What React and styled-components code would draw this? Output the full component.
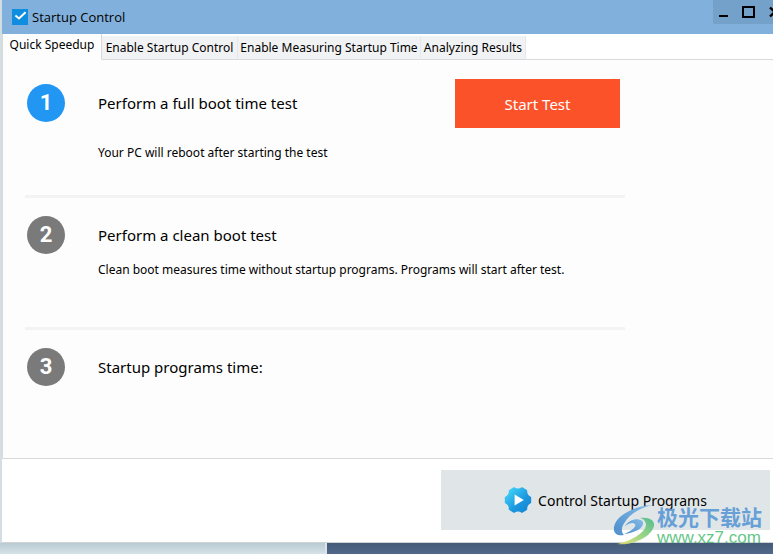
import React, { useState } from 'react';
import styled, { createGlobalStyle } from 'styled-components';

const tabs = [
  { label: 'Quick Speedup', width: 99 },
  { label: 'Enable Startup Control', width: 136 },
  { label: 'Enable Measuring Startup Time', width: 183 },
  { label: 'Analyzing Results', width: 105 },
];

const steps = [
  {
    title: 'Perform a full boot time test',
    note: 'Your PC will reboot after starting the test',
    noteGap: 17,
    action: 'Start Test',
    active: true,
  },
  {
    title: 'Perform a clean boot test',
    note: 'Clean boot measures time without startup programs. Programs will start after test.',
    noteGap: 2,
  },
  { title: 'Startup programs time:' },
];

const AppIcon = () => (
  <svg width="16" height="16" viewBox="0 0 16 16" aria-hidden="true">
    <rect width="16" height="16" fill="#0f8ee0" />
    <path d="M3.4 6.4 L7 9.4 L13.6 3.2" fill="none" stroke="#fff" strokeWidth="2" />
  </svg>
);

const GearIcon = () => (
  <svg width="28" height="28" viewBox="0 0 28 28" aria-hidden="true">
    <defs>
      <linearGradient id="gear" x1="0" y1="0" x2="1" y2="1">
        <stop offset="0.1" stopColor="#3fd0f7" />
        <stop offset="0.6" stopColor="#1b97df" />
        <stop offset="1" stopColor="#1583cf" />
      </linearGradient>
    </defs>
    <path
      d="M18 2 L22.4 4.6 Q22 9.4 26.4 11.5 V16.5 Q22 18.6 22.4 23.4 L18 26 Q14 23.2 10 26 L5.6 23.4 Q6 18.6 1.6 16.5 V11.5 Q6 9.4 5.6 4.6 L10 2 Q14 4.8 18 2 Z"
      fill="url(#gear)"
      stroke="url(#gear)"
      strokeWidth="1.6"
      strokeLinejoin="round"
    />
    <path d="M10.6 8.4 L19.8 14 L10.6 19.6 Z" fill="#fff" />
  </svg>
);

const SwirlLogo = () => (
  <svg width="44" height="42" viewBox="0 0 44 42" aria-hidden="true">
    <defs>
      <linearGradient id="swirlBlue" x1="0" y1="1" x2="1" y2="0">
        <stop offset="0" stopColor="#3b84c8" />
        <stop offset="1" stopColor="#7db7e8" />
      </linearGradient>
      <linearGradient id="swirlGreen" x1="0" y1="1" x2="1" y2="0">
        <stop offset="0" stopColor="#f0e36a" />
        <stop offset="0.5" stopColor="#8fd07a" />
        <stop offset="1" stopColor="#45b98a" />
      </linearGradient>
    </defs>
    <path
      d="M39 1 C22 2 3 11 1 23 C0 30 5 32 11 31 C8 28 8 23 12 18 C17 10 27 4 39 1 Z"
      fill="url(#swirlBlue)"
    />
    <path
      d="M12 22 C16 15 27 13 30 18 C31 24 22 29 11 30 C19 27 24 22 22 20 C20 18 16 19 12 22 Z"
      fill="url(#swirlBlue)"
    />
    <path
      d="M27 14 C36 13 42 16 41 22 C38 33 20 42 4 40 C18 37 32 29 33 21 C33 18 31 15 27 14 Z"
      fill="url(#swirlGreen)"
    />
  </svg>
);

const App = () => {
  const [current, setCurrent] = useState(0);

  return (
    <Desktop>
      <GlobalStyle />
      <Window>
        <TitleBar>
          <AppIcon />
          <Title>Startup Control</Title>
          <WindowButtons>
            <WindowButton aria-label="Minimize">
              <svg width="9" height="12" viewBox="0 0 9 12">
                <path d="M0 10 H9" stroke="#000" strokeWidth="2" />
              </svg>
            </WindowButton>
            <WindowButton aria-label="Maximize">
              <svg width="13" height="12" viewBox="0 0 13 12">
                <path d="M1 1 H12 V11 H1 Z" fill="none" stroke="#000" strokeWidth="2" />
              </svg>
            </WindowButton>
            <WindowButton aria-label="Close">
              <svg width="12" height="12" viewBox="0 0 12 12">
                <path d="M1 1.5 L10.5 10.5 M10.5 1.5 L1 10.5" stroke="#000" strokeWidth="2.4" />
              </svg>
            </WindowButton>
          </WindowButtons>
        </TitleBar>

        <TabBar role="tablist">
          {tabs.map((tab, i) => (
            <Tab
              key={tab.label}
              role="tab"
              aria-selected={i === current}
              $selected={i === current}
              $width={tab.width}
              onClick={() => setCurrent(i)}
            >
              {tab.label}
            </Tab>
          ))}
          <TabFiller />
        </TabBar>

        <Panel role="tabpanel">
          {steps.map((step, i) => (
            <Step key={step.title}>
              <StepHead>
                <StepNumber $active={step.active}>{i + 1}</StepNumber>
                <StepTitle>{step.title}</StepTitle>
                {step.action && <StartButton>{step.action}</StartButton>}
              </StepHead>
              {step.note && <StepNote $gap={step.noteGap}>{step.note}</StepNote>}
            </Step>
          ))}
        </Panel>

        <Footer>
          <ControlButton>
            <GearIcon />
            Control Startup Programs
          </ControlButton>
        </Footer>
      </Window>

      <Backdrop>
        <BackdropLight />
        <BackdropDark />
      </Backdrop>

      <Watermark>
        <SwirlLogo />
        <div>
          <WatermarkName>极光下载站</WatermarkName>
          <WatermarkSite>www.xz7.com</WatermarkSite>
        </div>
      </Watermark>
    </Desktop>
  );
};

const GlobalStyle = createGlobalStyle`
  * {
    box-sizing: border-box;
  }

  body {
    margin: 0;
    overflow: hidden;
  }

  body, button {
    font-family: 'Trebuchet MS', 'Noto Sans', 'Open Sans', sans-serif;
    color: #000;
  }

  button {
    border: none;
    padding: 0;
  }

  svg {
    display: block;
    flex: none;
  }
`;

const Desktop = styled.div`
  position: relative;
  display: flex;
  flex-direction: column;
  min-height: 100vh;
  background: #d3dee3;
`;

const Window = styled.main`
  margin-left: 2px;
  background: #fff;
  border-bottom: 1px solid #cfd3d5;
`;

const TitleBar = styled.header`
  display: flex;
  align-items: center;
  height: 34px;
  padding-left: 10px;
  background: #80b0db;
`;

const Title = styled.h1`
  flex: 1;
  margin: 0 0 0 4px;
  font-family: 'Open Sans', sans-serif;
  font-size: 13px;
  font-weight: 400;
  line-height: 18px;
`;

const WindowButtons = styled.div`
  display: flex;
  align-self: flex-start;
  width: 60px;
  height: 24px;
  overflow: hidden;
  padding-left: 6px;
  gap: 14px;
  background: #73a1c9;
`;

const WindowButton = styled.button`
  flex: none;
  display: flex;
  align-items: center;
  background: transparent;
`;

const TabBar = styled.div`
  display: flex;
  align-items: flex-end;
  height: 26px;
  border-left: 1px solid #d9d9d9;
`;

const Tab = styled.button`
  flex: none;
  width: ${props => props.$width}px;
  height: ${props => (props.$selected ? 26 : 24)}px;
  padding-bottom: ${props => (props.$selected ? 4 : 0)}px;
  border-right: 1px solid ${props => (props.$selected ? '#d9d9d9' : '#e6e8ea')};
  border-bottom: 1px solid ${props => (props.$selected ? '#fdfdfd' : '#d9d9d9')};
  background: ${props => (props.$selected ? '#fdfdfd' : '#f1f2f4')};
  font-size: 12px;
  white-space: nowrap;
`;

const TabFiller = styled.div`
  flex: 1;
  align-self: stretch;
  border-bottom: 1px solid #d9d9d9;
`;

const Panel = styled.section`
  padding: 6px 22px 0;
  border-left: 1px solid #d9d9d9;
  border-bottom: 1px solid #d9d9d9;
  background: #fdfdfd;
`;

const Step = styled.article`
  max-width: 600px;
  min-height: 132px;
  padding-top: 13px;

  &:not(:last-child) {
    border-bottom: 3px solid #f3f3f3;
  }

  &:last-child {
    min-height: 128px;
  }
`;

const StepHead = styled.div`
  display: flex;
  align-items: center;
  height: 48px;
  padding: 0 5px 0 2px;
`;

const StepNumber = styled.span`
  flex: none;
  width: 38px;
  height: 38px;
  margin-right: 33px;
  border-radius: 50%;
  background: ${props => (props.$active ? '#2196f3' : '#7a7a7a')};
  color: #fff;
  font-family: Roboto, sans-serif;
  font-size: 22px;
  font-weight: 700;
  line-height: 38px;
  text-align: center;
`;

const StepTitle = styled.h2`
  flex: 1;
  margin: 0;
  font-size: 15px;
  font-weight: 400;
  line-height: 20px;
`;

const StepNote = styled.p`
  margin: ${props => props.$gap}px 0 0 73px;
  font-size: 12px;
  line-height: 18px;
  white-space: nowrap;
`;

const StartButton = styled.button`
  align-self: flex-start;
  flex: none;
  width: 165px;
  height: 49px;
  background: #fc5229;
  color: #fff;
  font-size: 15px;
`;

const Footer = styled.footer`
  display: flex;
  justify-content: flex-end;
  padding: 11px 3px 12px;
`;

const ControlButton = styled.button`
  display: flex;
  align-items: center;
  justify-content: center;
  gap: 6px;
  width: 329px;
  height: 60px;
  background: #e0e6e8;
  font-size: 14px;
`;

const Backdrop = styled.div`
  flex: 1;
  display: flex;
  min-height: 11px;
`;

const BackdropLight = styled.div`
  width: 42.3%;
  border-right: 2px solid #dbe4e9;
  background: linear-gradient(#b9cad3, #d6e1e8);
`;

const BackdropDark = styled.div`
  flex: 1;
  background: linear-gradient(#435a78, #52688a);
`;

const Watermark = styled.div`
  position: absolute;
  right: 11px;
  bottom: 7px;
  display: flex;
  align-items: center;
  opacity: 0.9;
  pointer-events: none;
`;

const WatermarkName = styled.div`
  font-family: 'Noto Sans CJK SC', sans-serif;
  font-size: 21px;
  font-weight: 700;
  line-height: 26px;
  color: #5b98d6;
`;

const WatermarkSite = styled.div`
  font-family: 'Liberation Sans', sans-serif;
  font-size: 17px;
  line-height: 18px;
  color: #55bf7c;
`;

export default App;
